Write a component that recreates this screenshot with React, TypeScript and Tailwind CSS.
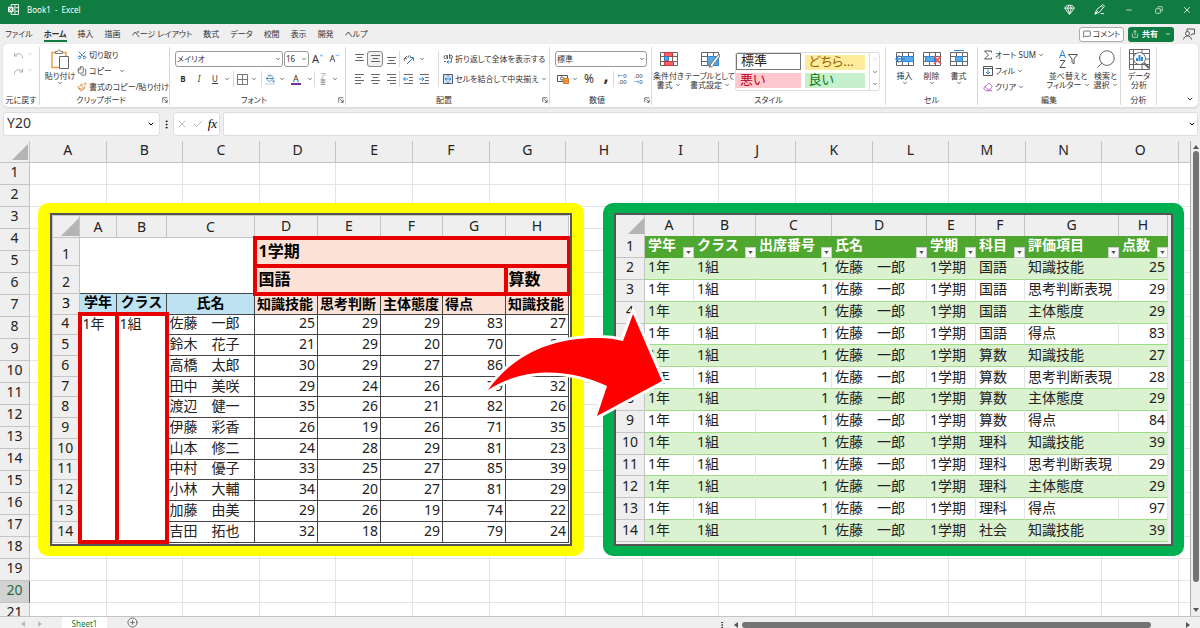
import React from 'react';
import {
  Gem,
  Minus,
  Copy as RestoreIcon,
  X,
  Check,
  MessageSquare,
  Share,
  Scissors,
  Files,
  Undo,
  Redo,
  Paintbrush,
  Eraser,
  Search,
  Funnel,
  ChevronDown,
  ChevronUp,
  CirclePlus,
  PaintBucket,
  EllipsisVertical,
} from 'lucide-react';

const menuTabs = ['ファイル', 'ホーム', '挿入', '描画', 'ページ レイアウト', '数式', 'データ', '校閲', '表示', '開発', 'ヘルプ'];

const sheetColumns = ['A', 'B', 'C', 'D', 'E', 'F', 'G', 'H', 'I', 'J', 'K', 'L', 'M', 'N', 'O'];
const sheetRows = Array.from({ length: 21 }, (_, i) => i + 1);

const scores = [
  { name: '佐藤　一郎', values: [25, 29, 29, 83, 27] },
  { name: '鈴木　花子', values: [21, 29, 20, 70, 28] },
  { name: '高橋　太郎', values: [30, 29, 27, 86, 31] },
  { name: '田中　美咲', values: [29, 24, 26, 79, 32] },
  { name: '渡辺　健一', values: [35, 26, 21, 82, 26] },
  { name: '伊藤　彩香', values: [26, 19, 26, 71, 35] },
  { name: '山本　修二', values: [24, 28, 29, 81, 23] },
  { name: '中村　優子', values: [33, 25, 27, 85, 39] },
  { name: '小林　大輔', values: [34, 20, 27, 81, 29] },
  { name: '加藤　由美', values: [29, 26, 19, 74, 22] },
  { name: '吉田　拓也', values: [32, 18, 29, 79, 24] },
];

const records = [
  ['国語', '知識技能', 25],
  ['国語', '思考判断表現', 29],
  ['国語', '主体態度', 29],
  ['国語', '得点', 83],
  ['算数', '知識技能', 27],
  ['算数', '思考判断表現', 28],
  ['算数', '主体態度', 29],
  ['算数', '得点', 84],
  ['理科', '知識技能', 39],
  ['理科', '思考判断表現', 29],
  ['理科', '主体態度', 29],
  ['理科', '得点', 97],
  ['社会', '知識技能', 39],
];

const recordHeaders = ['学年', 'クラス', '出席番号', '氏名', '学期', '科目', '評価項目', '点数'];

const Caret = () => <ChevronDown className="size-[6px] shrink-0 text-[#444]" strokeWidth={3} />;

interface IconButtonProps {
  label: string;
  className?: string;
  children: React.ReactNode;
}

const IconButton: React.FC<IconButtonProps> = ({ label, className = 'w-4', children }) => (
  <button type="button" aria-label={label} className={`flex h-4 shrink-0 items-center justify-center ${className}`}>
    {children}
  </button>
);

const MoreButton: React.FC<{ label: string; className?: string }> = ({ label, className = 'w-2' }) => (
  <IconButton label={label} className={className}>
    <Caret />
  </IconButton>
);

const Divider: React.FC = () => <span className="h-4 w-px shrink-0 bg-[#dcdcdc]" />;

interface GroupProps {
  title: string;
  className: string;
  launcher?: boolean;
  children: React.ReactNode;
}

const Group: React.FC<GroupProps> = ({ title, className, launcher, children }) => (
  <section className={`flex h-[58px] shrink-0 flex-col border-r border-[#d8d8d8] ${className}`}>
    <div className="min-h-0 flex-1">{children}</div>
    <div className="flex h-[10px] items-center">
      <span className="flex-1 text-center">{title}</span>
      {launcher && (
        <button type="button" aria-label={`${title}の設定`} className="mr-px">
          <svg viewBox="0 0 8 8" className="size-[6px]" fill="none" stroke="#444">
            <path d="M1 7V1h6M3 3l4 4M7 3.5V7H3.5" />
          </svg>
        </button>
      )}
    </div>
  </section>
);

interface DropdownProps {
  label: string;
  value: string;
  className: string;
}

const Dropdown: React.FC<DropdownProps> = ({ label, value, className }) => (
  <div className={`flex h-4 shrink-0 items-center rounded-[3px] border border-[#999] bg-white pr-px ${className}`}>
    <select aria-label={label} className="h-full min-w-0 flex-1 appearance-none bg-transparent pl-px outline-none">
      <option>{value}</option>
    </select>
    <Caret />
  </div>
);

interface BigButtonProps {
  lines: string[];
  className: string;
  inlineCaret?: boolean;
  belowCaret?: boolean;
  children: React.ReactNode;
}

const BigButton: React.FC<BigButtonProps> = ({ lines, className, inlineCaret, belowCaret, children }) => (
  <button type="button" className={`flex shrink-0 flex-col items-center whitespace-nowrap ${className}`}>
    <span className="flex h-6 items-center">{children}</span>
    {lines.map((line, i) => (
      <span key={line} className="flex h-[9px] items-center gap-[2px] leading-[9px]">
        {line}
        {inlineCaret && i === lines.length - 1 && <Caret />}
      </span>
    ))}
    {belowCaret && <Caret />}
  </button>
);

const linePaths: Record<string, string> = {
  top: 'M1 1.5h9M2.5 4.5h6M1 7.5h9',
  middle: 'M1 2.5h9M2.5 5.5h6M1 8.5h9',
  bottom: 'M1 4.5h9M2.5 7.5h6M1 10.5h9',
  left: 'M1 1.5h9M1 4.5h6M1 7.5h9M1 10.5h6',
  center: 'M1 1.5h9M2.5 4.5h6M1 7.5h9M2.5 10.5h6',
  right: 'M1 1.5h9M4 4.5h6M1 7.5h9M4 10.5h6',
};

const Lines: React.FC<{ kind: string }> = ({ kind }) => (
  <svg viewBox="0 0 11 12" className="h-3 w-[11px]" fill="none" stroke="#666">
    <path d={linePaths[kind]} />
  </svg>
);

const IndentIcon: React.FC<{ inward?: boolean }> = ({ inward }) => (
  <svg viewBox="0 0 11 12" className="h-3 w-[11px]" fill="none" stroke="#666">
    <path d="M1 1.5h9M6 4.5h4M6 7.5h4M1 10.5h9" />
    <path stroke="#2b88d8" d={inward ? 'M0 6h4.5M3 4l2 2-2 2' : 'M.5 6H5M2.5 4l-2 2 2 2'} />
  </svg>
);

// Small worksheet drawing shared by the style and cell buttons
const GridIcon: React.FC<{ children?: React.ReactNode }> = ({ children }) => (
  <svg viewBox="0 0 20 18" className="h-[18px] w-5" fill="none" stroke="#666">
    <path fill="#fff" d="M1.500 2.500h17v13h-17z" />
    <path d="M1.500 6.500h17M1.500 11.500h17M7.500 2.500v13M13.500 2.500v13" />
    {children}
  </svg>
);

const Corner: React.FC<{ className: string }> = ({ className }) => (
  <svg viewBox="0 0 16 16" className={className} fill="#b4b4b4">
    <path d="M16 0v16H0z" />
  </svg>
);

const TitleBar: React.FC = () => (
  <header className="flex h-6 shrink-0 items-center bg-[#107c41] pb-[5px] pl-2 text-white">
    <svg viewBox="0 0 12 12" className="size-[11px]" fill="none" stroke="#fff">
      <path d="M3.500 3V.5h8v11h-8V9M7.500 .5v11M8 4h3.500M8 8h3.500" />
      <path fill="#fff" d="M.5 3.500h5v5h-5z" />
      <path stroke="#107c41" d="M1.700 4.500l2.600 3M4.300 4.500l-2.600 3" />
    </svg>
    <h1 className="ml-2 text-[8px] whitespace-pre">Book1  -  Excel</h1>
    <div className="ml-auto flex items-center">
      <IconButton label="Premium" className="w-[30px]"><Gem className="size-[11px]" /></IconButton>
      <IconButton label="ペン" className="w-[30px]">
        <svg viewBox="0 0 12 12" className="size-[11px]" fill="none" stroke="#fff">
          <path d="M1 11l2-5 5-4 2 2-4 5-5 2zM8 2l1.500-1.500 2 2L10 4M1 11l3.500-3.500M7 10.500h4" />
        </svg>
      </IconButton>
      <IconButton label="最小化" className="w-[30px]"><Minus className="size-2" /></IconButton>
      <IconButton label="元のサイズ" className="w-[30px]"><RestoreIcon className="size-2 rotate-90" /></IconButton>
      <IconButton label="閉じる" className="w-[26px]"><X className="size-[10px]" /></IconButton>
    </div>
  </header>
);

const MenuBar: React.FC = () => (
  <nav className="flex h-5 shrink-0 items-center pr-1 pl-[5px] text-[#333]">
    <div className="flex gap-[11px]">
      {menuTabs.map((tab) => (
        <button
          key={tab}
          type="button"
          className={`h-[15px] border-b-2 leading-[13px] whitespace-nowrap ${
            tab === 'ホーム' ? 'border-[#107c41] font-bold' : 'border-transparent'
          }`}
        >
          {tab}
        </button>
      ))}
    </div>
    <button type="button" className="ml-auto flex h-[15px] w-[45px] items-center justify-center gap-[2px] rounded-[3px] border border-[#aaa] bg-white">
      <MessageSquare className="size-2" />コメント
    </button>
    <button type="button" className="ml-1 flex h-[15px] w-[46px] items-center justify-center gap-[3px] rounded-[3px] bg-[#107c41] font-bold text-white">
      <Share className="size-2" />共有
      <ChevronDown className="ml-1 size-[6px]" strokeWidth={3} />
    </button>
    <IconButton label="ユーザー" className="ml-2 w-[14px]">
      <svg viewBox="0 0 12 12" className="size-3" fill="none" stroke="#555">
        <path d="M4 4V1h7.500v5H9l-1 1.500M.5 11.500C1 9 2.500 8 4.500 8s3.500 1 4 3.500" />
        <circle cx="4.500" cy="5.500" r="2" />
      </svg>
    </IconButton>
  </nav>
);

const ClipboardGroup: React.FC = () => (
  <Group title="クリップボード" className="w-[130px]" launcher>
    <div className="flex pl-1">
      <BigButton lines={['貼り付け']} className="w-8" belowCaret>
        <svg viewBox="0 0 18 21" className="h-[21px] w-[18px]" fill="#fff">
          <path stroke="#e8a04a" strokeWidth="1.500" d="M1 3.500h14v15H1z" />
          <path stroke="#777" d="M4.500 4.500V2.500h2c0-2 3-2 3 0h2v2z" />
          <path stroke="#666" d="M8.500 7.500h9v12h-9z" />
        </svg>
      </BigButton>
      <div className="ml-px flex flex-col">
        <button type="button" className="flex h-4 items-center gap-[2px]">
          <Scissors className="size-[10px] -rotate-90 text-[#2b78b8]" />切り取り
        </button>
        <button type="button" className="flex h-4 items-center gap-[2px]">
          <Files className="size-[10px] -scale-x-100 text-[#555]" />コピー
          <span className="ml-[5px]"><Caret /></span>
        </button>
        <button type="button" className="flex h-4 items-center gap-[2px] whitespace-nowrap">
          <Paintbrush className="size-[10px] text-[#d9822b]" />書式のコピー/貼り付け
        </button>
      </div>
    </div>
  </Group>
);

const FontGroup: React.FC = () => (
  <Group title="フォント" className="w-[176px]" launcher>
    <div className="flex flex-col gap-1 pt-[4px] pl-[5px]">
      <div className="flex items-center gap-px">
        <Dropdown label="フォント名" value="メイリオ" className="w-[108px]" />
        <Dropdown label="フォント サイズ" value="16" className="w-[25px]" />
        <IconButton label="拡大"><span className="text-[11px]">A</span><ChevronUp className="mb-2 size-[5px] text-[#2b88d8]" strokeWidth={4} /></IconButton>
        <IconButton label="縮小"><span className="text-[9px]">A</span><ChevronDown className="mb-2 size-[5px] text-[#2b88d8]" strokeWidth={4} /></IconButton>
      </div>
      <div className="flex items-center">
        <IconButton label="太字"><b>B</b></IconButton>
        <IconButton label="斜体"><i>I</i></IconButton>
        <IconButton label="下線"><u>U</u></IconButton>
        <MoreButton label="下線の種類" />
        <span className="ml-[2px] flex"><Divider /></span>
        <IconButton label="罫線">
          <svg viewBox="0 0 11 11" className="size-[11px]" fill="none" stroke="#777"><path d="M.5.5h10v10H.5zM.5 5.500h10M5.500 .5v10" /></svg>
        </IconButton>
        <MoreButton label="罫線の種類" />
        <span className="ml-[3px] flex"><Divider /></span>
        <IconButton label="塗りつぶし">
          <span className="flex flex-col items-center"><PaintBucket className="size-[9px] text-[#2b6ca3]" /><span className="h-[2px] w-[10px] bg-[#dbe9f7]" /></span>
        </IconButton>
        <MoreButton label="塗りつぶしの色" />
        <IconButton label="文字色" className="w-5">
          <span className="flex flex-col items-center text-[9px] leading-[9px]">A<span className="h-[2px] w-[10px] bg-[#7030a0]" /></span>
        </IconButton>
        <MoreButton label="フォントの色" />
        <Divider />
        <IconButton label="ふりがな">
          <span className="flex flex-col items-center text-[6px] leading-[6px] text-[#888]"><span>ア</span><span>亜</span></span>
        </IconButton>
        <MoreButton label="ふりがなの設定" />
      </div>
    </div>
  </Group>
);

const AlignGroup: React.FC = () => (
  <Group title="配置" className="w-[204px]" launcher>
    <div className="flex gap-[6px] pt-[4px] pl-[5px]">
      <div className="flex flex-col gap-1">
        <div className="flex items-center">
          <IconButton label="上揃え"><Lines kind="top" /></IconButton>
          <IconButton label="上下中央揃え" className="w-4 rounded-[3px] border border-[#888] bg-[#f0f0f0]"><Lines kind="middle" /></IconButton>
          <IconButton label="下揃え"><Lines kind="bottom" /></IconButton>
          <Divider />
          <IconButton label="方向" className="w-[18px]">
            <svg viewBox="0 0 12 12" className="size-3" fill="none" stroke="#666">
              <path d="M1 6l3-3M2 8c-2-1 0-4 2-2M5 5c0-3 3-3 3 0" />
              <path stroke="#2b88d8" d="M4 11l6-6M7 4.500h3.500V8" />
            </svg>
          </IconButton>
          <MoreButton label="方向の種類" />
        </div>
        <div className="flex items-center">
          <IconButton label="左揃え"><Lines kind="left" /></IconButton>
          <IconButton label="中央揃え"><Lines kind="center" /></IconButton>
          <IconButton label="右揃え"><Lines kind="right" /></IconButton>
          <Divider />
          <IconButton label="インデントを減らす"><IndentIcon /></IconButton>
          <IconButton label="インデントを増やす"><IndentIcon inward /></IconButton>
        </div>
      </div>
      <div className="flex flex-col gap-1 border-l border-[#dcdcdc] pl-1 whitespace-nowrap">
        <button type="button" className="flex h-4 items-center gap-[2px]">
          <svg viewBox="0 0 10 10" className="size-[10px]" fill="none" stroke="#666">
            <circle cx="2.500" cy="3" r="1.500" /><path d="M4.500 1v4M6.500 0v4.500M1 7.500h2" /><circle cx="8" cy="3" r="1.500" />
            <path stroke="#2b88d8" d="M8.500 5v3H4M5.500 6.500L4 8l1.500 1.500" />
          </svg>
          折り返して全体を表示する
        </button>
        <button type="button" className="flex h-4 items-center gap-[2px]">
          <svg viewBox="0 0 10 10" className="size-[10px]" fill="none" stroke="#557">
            <path fill="#cfe6f8" d="M.5.5h9v9h-9z" /><path stroke="#2b88d8" d="M2 5h6M3.500 3.500L2 5l1.500 1.500M6.500 3.500L8 5 6.500 6.500" /><path d="M5 .5v2M5 7.500v2" />
          </svg>
          セルを結合して中央揃え
          <Caret />
        </button>
      </div>
    </div>
  </Group>
);

const NumberGroup: React.FC = () => (
  <Group title="数値" className="w-[102px]" launcher>
    <div className="flex flex-col gap-1 pt-[4px] pl-[5px]">
      <Dropdown label="表示形式" value="標準" className="w-[92px]" />
      <div className="flex items-center">
        <IconButton label="通貨">
          <svg viewBox="0 0 12 10" className="h-[10px] w-3" fill="none" stroke="#555">
            <path d="M.5 1.500h10v6H.5z" /><circle cx="5" cy="4.500" r="1.500" /><path fill="#f4a23c" stroke="#d9722b" d="M6.500 4.500h5v5h-5zM6.500 7h5" />
          </svg>
        </IconButton>
        <MoreButton label="通貨の種類" />
        <IconButton label="パーセント" className="w-5"><span className="text-[12px]">%</span></IconButton>
        <IconButton label="桁区切り" className="w-[14px]"><span className="pb-2 text-[18px] font-bold">,</span></IconButton>
        <Divider />
        <IconButton label="小数点以下を増やす">
          <span className="flex flex-col text-right text-[6px] leading-[6px]"><span><span className="text-[#2b88d8]">←</span>0</span><span>.00</span></span>
        </IconButton>
        <IconButton label="小数点以下を減らす">
          <span className="flex flex-col text-right text-[6px] leading-[6px]"><span>.00</span><span><span className="text-[#2b88d8]">→</span>0</span></span>
        </IconButton>
      </div>
    </div>
  </Group>
);

const StyleGroup: React.FC = () => (
  <Group title="スタイル" className="w-[234px]">
    <div className="flex gap-[2px]">
      <BigButton lines={['条件付き', '書式']} className="w-[33px]" inlineCaret>
        <GridIcon>
          <path fill="#f4616b" stroke="#d13438" d="M5.500 2.500h8v4h-8zM5.500 11.500h9v4h-9z" />
          <path fill="#5aa9e6" stroke="#2b78b8" d="M5.500 6.500h4v4h-4z" />
        </GridIcon>
      </BigButton>
      <BigButton lines={['テーブルとして', '書式設定']} className="w-[46px]" inlineCaret>
        <GridIcon>
          <path fill="#5aa9e6" stroke="#2b88d8" d="M7.500 6.500h11v9h-11z" />
          <path fill="#fff" d="M19 4l-7 8-3 5c3 0 5-1 5-3l6-8z" />
        </GridIcon>
      </BigButton>
      <div className="mt-[5px] flex h-[39px] w-[145px] overflow-hidden rounded-[3px] border border-[#ddd] text-[13px] leading-[14px]">
        <div className="grid flex-1 grid-cols-2 gap-x-1 gap-y-[2px] pb-[2px]">
          <button type="button" className="border border-[#777] pb-[3px] pl-1 text-left leading-3 text-[#222]">標準</button>
          <button type="button" className="mt-[2px] mr-1 bg-[#ffeb9c] pb-[3px] pl-1 text-left leading-3 text-[#9c6500]">どちら...</button>
          <button type="button" className="mt-px bg-[#ffc7ce] pb-[3px] pl-1 text-left leading-3 text-[#c00028]">悪い</button>
          <button type="button" className="mt-px mr-1 bg-[#c6efce] pb-[3px] pl-1 text-left leading-3 text-[#107c10]">良い</button>
        </div>
        <div className="flex w-[10px] flex-col items-center justify-between border-l border-[#ddd] py-[3px]">
          <ChevronUp className="size-[6px] text-[#bbb]" />
          <Caret />
          <Caret />
        </div>
      </div>
    </div>
  </Group>
);

const CellGroup: React.FC = () => (
  <Group title="セル" className="w-[92px]">
    <div className="flex pl-[5px]">
      <BigButton lines={['挿入']} className="w-[27px]" belowCaret>
        <GridIcon><path fill="#5aa9e6" stroke="#2b88d8" d="M6.500 6.500h12v5h-12z" /><path stroke="#2b88d8" strokeWidth="1.500" d="M10 9H1M4 5.500L1 9l3 3.500" /></GridIcon>
      </BigButton>
      <BigButton lines={['削除']} className="w-[27px]" belowCaret>
        <GridIcon><path fill="#5aa9e6" stroke="#2b88d8" d="M3.500 6.500h9v5h-9z" /><path stroke="#f0525c" strokeWidth="1.500" d="M12 6l7 8M19 6l-7 8" /></GridIcon>
      </BigButton>
      <BigButton lines={['書式']} className="w-[27px]" belowCaret>
        <GridIcon><path fill="#5aa9e6" stroke="#2b88d8" d="M6.500 6.500h7v5h-7z" /><path stroke="#2b88d8" d="M5 .5h10" /></GridIcon>
      </BigButton>
    </div>
  </Group>
);

const EditGroup: React.FC = () => (
  <Group title="編集" className="w-[143px]">
    <div className="flex pl-[5px]">
      <div className="flex w-16 flex-col">
        <button type="button" className="flex h-4 items-center gap-[2px] whitespace-nowrap">
          <svg viewBox="0 0 10 10" className="size-[10px]" fill="none" stroke="#555"><path d="M8.500 2.500V1H1.500l4 4-4 4h7V7.500" /></svg>
          オート SUM
          <Caret />
        </button>
        <button type="button" className="flex h-4 items-center gap-[2px]">
          <svg viewBox="0 0 10 10" className="size-[10px]" fill="none" stroke="#555"><path d="M.5.500h9v9h-9zM.5 2.500h9" /><path stroke="#2b88d8" d="M5 3.500v4.500M3 6l2 2 2-2" /></svg>
          フィル<Caret />
        </button>
        <button type="button" className="flex h-4 items-center gap-[2px]">
          <Eraser className="size-[10px] text-[#b146c2]" />クリア<Caret />
        </button>
      </div>
      <BigButton lines={['並べ替えと', 'フィルター']} className="w-[42px]" inlineCaret>
        <svg viewBox="0 0 20 20" className="size-5" fill="none">
          <path stroke="#2b88d8" d="M1.500 9l3-7.500 3 7.500M2.500 6.500h4" />
          <path stroke="#555" d="M2 11.500h5l-5 7h5.500M10.500 5.500h9l-3.500 4.500v5l-2-1.500V10z" />
        </svg>
      </BigButton>
      <BigButton lines={['検索と', '選択']} className="ml-[3px] w-[27px]" inlineCaret>
        <Search className="size-[22px] -scale-x-100 text-[#555]" strokeWidth={1} />
      </BigButton>
    </div>
  </Group>
);

const AnalysisGroup: React.FC = () => (
  <Group title="分析" className="w-9">
    <BigButton lines={['データ', '分析']} className="w-9">
      <svg viewBox="0 0 21 21" className="size-[21px]" fill="none" stroke="#666">
        <path d="M.5.5h20v20H.5zM.5 4.500h20M.5 15.500h20M4.500 .5v20M13 .5v20M.5 10h20" />
        <circle cx="10.500" cy="9.500" r="6" fill="#fff" />
        <path stroke="#2b88d8" strokeWidth="2" d="M8 12V9M10.500 12V6M13 12V8" />
        <path strokeWidth="2" d="M15 14l5 5" />
      </svg>
    </BigButton>
  </Group>
);

const Ribbon: React.FC = () => (
  <div className="mr-[2px] ml-[3px] flex h-[63px] shrink-0 overflow-hidden rounded-[5px] bg-white pt-[3px] text-[#333] shadow">
    <Group title="元に戻す" className="w-[37px]">
      <div className="flex flex-col pl-[7px] text-[#aaa]">
        <div className="flex"><IconButton label="元に戻す"><Undo className="size-[11px]" /></IconButton><ChevronDown className="mt-1 ml-px size-[6px]" /></div>
        <div className="flex"><IconButton label="やり直し"><Redo className="size-[11px]" /></IconButton><ChevronDown className="mt-1 ml-px size-[6px]" /></div>
      </div>
    </Group>
    <ClipboardGroup />
    <FontGroup />
    <AlignGroup />
    <NumberGroup />
    <StyleGroup />
    <CellGroup />
    <EditGroup />
    <AnalysisGroup />
    <button type="button" aria-label="リボンを折りたたむ" className="mt-auto mr-1 mb-1 ml-auto">
      <ChevronDown className="size-2" strokeWidth={3} />
    </button>
  </div>
);

const FormulaBar: React.FC = () => (
  <div className="my-[5px] mr-[2px] ml-[3px] flex h-6 shrink-0 items-center">
    <div className="flex h-full w-[157px] items-center rounded-[3px] border border-[#ddd] bg-white pr-1">
      <input aria-label="名前ボックス" defaultValue="Y20" className="w-0 flex-1 pb-[2px] pl-[3px] text-[14px] leading-4 text-[#333] outline-none" />
      <ChevronDown className="size-2" strokeWidth={3} />
    </div>
    <EllipsisVertical className="mx-px size-[11px]" />
    <div className="flex h-full w-[47px] items-center justify-around rounded-[3px] border border-[#ddd] bg-white">
      <X className="size-3 text-[#bbb]" strokeWidth={2} />
      <Check className="size-3 text-[#bbb]" strokeWidth={2} />
      <button type="button" aria-label="関数の挿入" className="font-['Liberation_Serif',serif] text-[13px] italic">fx</button>
    </div>
    <div className="ml-[3px] flex h-full flex-1 items-center rounded-[3px] border border-[#ddd] bg-white pr-px">
      <input aria-label="数式バー" className="flex-1 text-[14px] outline-none" />
      <ChevronDown className="size-2" strokeWidth={3} />
    </div>
  </div>
);

const Worksheet: React.FC = () => (
  <table className="w-full table-fixed border-separate border-spacing-0 border-r border-[#ababab] bg-white text-[14px] leading-4 text-[#222]">
    <colgroup>
      <col className="w-[30px]" />
      {sheetColumns.map((c) => <col key={c} />)}
      <col className="w-[11px]" />
    </colgroup>
    <thead>
      <tr className="h-[22px] bg-[#efefef]">
        <th className="border-r border-b border-[#c4c4c4] p-0 pr-px"><Corner className="ml-auto size-4" /></th>
        {sheetColumns.map((c) => (
          <th key={c} className="border-r border-b border-[#c4c4c4] p-0 pb-1 font-normal">{c}</th>
        ))}
        <th className="border-b border-[#c4c4c4] p-0" />
      </tr>
    </thead>
    <tbody>
      {sheetRows.map((row) => (
        <tr key={row} className="h-[22px]">
          <th
            className={`border-r border-b p-0 pb-1 font-normal ${
              row === 20 ? 'border-r-[#107c41] border-b-[#c4c4c4] bg-[#d2d2d2] text-[#1e6b41]' : 'border-[#c4c4c4] bg-[#efefef]'
            }`}
          >
            {row}
          </th>
          {sheetColumns.map((c) => <td key={c} className="border-r border-b border-[#e4e4e4] p-0" />)}
          <td className="border-b border-[#e4e4e4] p-0" />
        </tr>
      ))}
    </tbody>
  </table>
);

const head = 'border border-[#c4c4c4] bg-[#efefef] p-0 font-normal';
const grid = 'border border-[#444]';
const marked = 'border-4 border-[#e60000]';

const CrossTable: React.FC = () => (
  <div className="h-[353px] w-[546px] rounded-[10px] bg-[#ffff00] px-3 py-[10px]">
    <div className="h-[333px] overflow-hidden border-2 border-[#555] bg-[#efefef]">
      <table className="h-[329px] w-[517px] table-fixed border-collapse bg-white text-[14px] leading-4 text-[#222]">
        <colgroup>
          <col className="w-[27px]" />
          <col className="w-[37px]" />
          <col className="w-[50px]" />
          <col className="w-[88px]" />
          <col className="w-[63px]" />
          <col className="w-[63px]" />
          <col className="w-[62px]" />
          <col className="w-[63px]" />
          <col className="w-[63px]" />
        </colgroup>
        <thead>
          <tr className="h-[22px]">
            <th className={head}><Corner className="ml-auto size-[18px]" /></th>
            {sheetColumns.slice(0, 8).map((c) => <th key={c} className={head}>{c}</th>)}
          </tr>
        </thead>
        <tbody>
          <tr className="h-7">
            <th className={`${head} pt-1`}>1</th>
            <td colSpan={3} rowSpan={2} />
            <th colSpan={5} className={`${marked} bg-[#fce2d6] p-0 pb-[2px] pl-[2px] text-left text-[16px] text-black`}>1学期</th>
          </tr>
          <tr className="h-7">
            <th className={`${head} pt-1`}>2</th>
            <th colSpan={4} className={`${marked} bg-[#fce2d6] p-0 pb-[2px] pl-[2px] text-left text-[16px] text-black`}>国語</th>
            <th className={`${marked} bg-[#fce2d6] p-0 pb-[2px] pl-px text-left text-[16px] text-black`}>算数</th>
          </tr>
          <tr className="h-5 whitespace-nowrap text-black">
            <th className={`${head} pb-[2px]`}>3</th>
            <th className={`${grid} bg-[#bde3f2] p-0 pb-[2px]`}>学年</th>
            <th className={`${grid} bg-[#bde3f2] p-0 pb-[2px]`}>クラス</th>
            <th className={`${grid} bg-[#bde3f2] p-0 pb-[2px]`}>氏名</th>
            {['知識技能', '思考判断', '主体態度', '得点', '知識技能'].map((title, i) => (
              <th key={i} className={`${grid} bg-[#fce2d6] p-0 pb-[2px] pl-[2px] text-left`}>{title}</th>
            ))}
          </tr>
          {scores.map((score, i) => (
            <tr key={score.name}>
              <th className={`${head} pb-[2px]`}>{i + 4}</th>
              {i === 0 && (
                <>
                  <td rowSpan={11} className={`${marked} p-0 pl-px align-top whitespace-nowrap`}>1年</td>
                  <td rowSpan={11} className={`${marked} p-0 pl-px align-top whitespace-nowrap`}>1組</td>
                </>
              )}
              <td className={`${grid} p-0 pb-[2px] pl-px whitespace-nowrap`}>{score.name}</td>
              {score.values.map((value, j) => (
                <td key={j} className={`${grid} p-0 pr-[2px] pb-[2px] text-right`}>{value}</td>
              ))}
            </tr>
          ))}
        </tbody>
      </table>
    </div>
  </div>
);

const ListTable: React.FC = () => (
  <div className="h-[353px] w-[581px] rounded-[10px] bg-[#00b050] px-[11px] py-[10px]">
    <div className="h-[333px] overflow-hidden border-2 border-[#555] bg-[#efefef]">
      <table className="h-[327px] w-[552px] table-fixed border-separate border-spacing-0 bg-white text-[14px] leading-4 text-[#222]">
        <colgroup>
          <col className="w-[29px]" />
          <col className="w-[49px]" />
          <col className="w-[62px]" />
          <col className="w-[76px]" />
          <col className="w-[95px]" />
          <col className="w-[49px]" />
          <col className="w-[49px]" />
          <col className="w-[94px]" />
          <col className="w-[49px]" />
        </colgroup>
        <thead>
          <tr className="h-[21px] bg-[#efefef]">
            <th className="border-r border-[#c4c4c4] p-0"><Corner className="ml-auto size-4" /></th>
            {sheetColumns.slice(0, 8).map((c) => <th key={c} className="border-r border-[#c4c4c4] p-0 pb-[2px] font-normal">{c}</th>)}
          </tr>
          <tr className="h-[22px]">
            <th className="border-r border-b border-[#c4c4c4] bg-[#efefef] p-0 pb-[2px] font-normal">1</th>
            {recordHeaders.map((title) => (
              <th key={title} className="bg-[#4ea72e] p-0 pl-[3px]">
                <div className="flex h-[21px] justify-between whitespace-nowrap text-white">
                  <span>{title}</span>
                  <button type="button" aria-label={`${title}で絞り込む`} className="flex size-[11px] shrink-0 items-center justify-center self-end border border-[#ccc] bg-[#fafafa]">
                    <svg viewBox="0 0 6 4" className="h-[3px] w-[5px]" fill="#555"><path d="M0 0h6L3 4z" /></svg>
                  </button>
                </div>
              </th>
            ))}
          </tr>
        </thead>
        <tbody>
          {records.map(([subject, item, point], i) => {
            const cell = `border-b border-b-[#9fdc86] p-0 pb-[2px] pl-[3px] whitespace-nowrap border-r ${
              i % 2 === 0 ? 'border-r-[#daf2d0] bg-[#daf2d0]' : 'border-r-[#e4e4e4]'
            }`;
            return (
              <tr key={i}>
                <th className="border-r border-b border-[#c4c4c4] bg-[#efefef] p-0 pb-[2px] font-normal">{i + 2}</th>
                <td className={cell}>1年</td>
                <td className={cell}>1組</td>
                <td className={`${cell} pr-[2px] text-right`}>1</td>
                <td className={cell}>佐藤　一郎</td>
                <td className={cell}>1学期</td>
                <td className={cell}>{subject}</td>
                <td className={cell}>{item}</td>
                <td className={`${cell} pr-[2px] text-right`}>{point}</td>
              </tr>
            );
          })}
        </tbody>
      </table>
    </div>
  </div>
);

const StatusTabs: React.FC = () => (
  <footer className="flex h-3 shrink-0 items-start overflow-hidden border-t border-[#c4c4c4] bg-[#efefef]">
    <div className="flex w-[62px] justify-center gap-[13px] pt-1">
      <svg viewBox="0 0 4 6" className="h-[6px] w-1" fill="#bbb"><path d="M4 0v6L0 3z" /></svg>
      <svg viewBox="0 0 4 6" className="h-[6px] w-1" fill="#bbb"><path d="M0 0v6l4-3z" /></svg>
    </div>
    <button type="button" className="h-[11px] w-[45px] bg-white pt-[2px] text-[8px] leading-[9px] text-[#107c41]">Sheet1</button>
    <button type="button" aria-label="新しいシート" className="ml-5"><CirclePlus className="size-[11px] text-[#666]" /></button>
    <div className="ml-auto flex w-2/5 items-center pt-1">
      <EllipsisVertical className="mr-2 -ml-[2px] size-2" />
      <svg viewBox="0 0 4 6" className="mr-1 h-[6px] w-1" fill="#555"><path d="M4 0v6L0 3z" /></svg>
      <div className="h-[6px] flex-1 rounded-full bg-[#737373]" />
      <svg viewBox="0 0 4 6" className="mr-[10px] ml-[35px] h-[6px] w-1" fill="#555"><path d="M0 0v6l4-3z" /></svg>
    </div>
  </footer>
);

const App: React.FC = () => (
  <div
    lang="ja"
    className="flex h-screen flex-col overflow-hidden bg-[#efefef] font-['Noto_Sans','Noto_Sans_CJK_JP',sans-serif] text-[8px] leading-3 [font-feature-settings:'palt']"
  >
    <TitleBar />
    <MenuBar />
    <Ribbon />
    <FormulaBar />
    <main className="relative flex min-h-0 flex-1 overflow-hidden [font-feature-settings:normal]">
      <div className="min-w-0 flex-1">
        <Worksheet />
      </div>
      <div className="flex w-[9px] shrink-0 flex-col items-center gap-[2px] py-1">
        <svg viewBox="0 0 6 4" className="h-1 w-[6px]" fill="#555"><path d="M0 4h6L3 0z" /></svg>
        <div className="mb-6 w-[6px] flex-1 rounded-full bg-[#737373]" />
        <svg viewBox="0 0 6 4" className="h-1 w-[6px]" fill="#555"><path d="M0 0h6L3 4z" /></svg>
      </div>
      <div className="absolute top-[62px] right-4 left-[38px] flex justify-between">
        <CrossTable />
        <ListTable />
        <svg viewBox="480 308 190 112" className="absolute top-[105px] left-[442px] h-[112px] w-[190px] overflow-visible">
          <path
            fill="#ff0000"
            stroke="#fff"
            strokeWidth="6"
            paintOrder="stroke"
            d="M488 390C515 352 556 337 600 338Q612 338 623 341L633 314L662 381L597 416L607 386C570 369 525 366 488 390Z"
          />
        </svg>
      </div>
    </main>
    <StatusTabs />
  </div>
);

export default App;
